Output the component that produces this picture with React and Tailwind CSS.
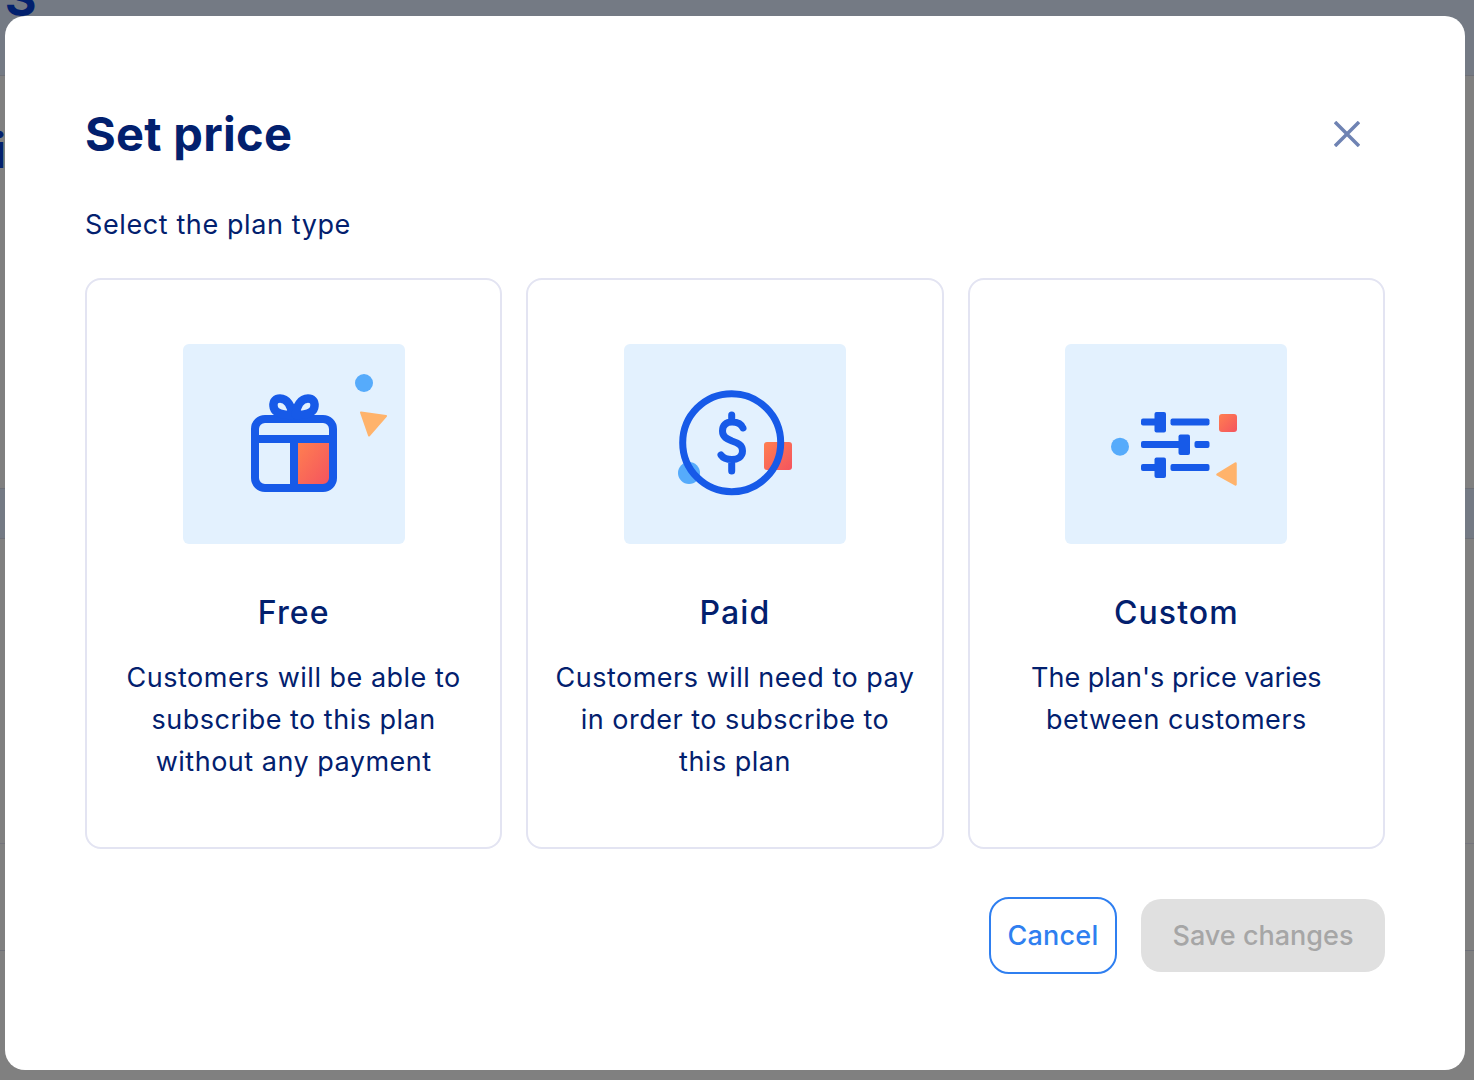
const FONT = "font-['Inter','Liberation_Sans',sans-serif]";

function Gift() {
  return (
    <svg viewBox="0 0 222 200" className="w-full h-full">
      <defs>
        <linearGradient id="g1" x1="0" y1="0" x2="1" y2="1">
          <stop offset="0" stopColor="#ff7f50" />
          <stop offset="1" stopColor="#f4545f" />
        </linearGradient>
      </defs>
      <circle cx="181" cy="39" r="9" fill="#56abfb" />
      <path d="M178 68.500L203 72L186 91.500Z" fill="#ffb36b" stroke="#ffb36b" strokeWidth="2" strokeLinejoin="round" />
      <rect x="115" y="99" width="31" height="41" fill="url(#g1)" />
      <rect x="72" y="75" width="78" height="69" rx="10" fill="none" stroke="#175ae8" strokeWidth="8" />
      <path d="M72 95H150M111 95V144" fill="none" stroke="#175ae8" strokeWidth="8" />
      <path d="M109 71C101 71 91 70 90.500 62C90 57 93 54.500 97 54.500C104 54.500 109 62 109 71Z" fill="none" stroke="#175ae8" strokeWidth="8.500" strokeLinejoin="round" />
      <path d="M113 71C121 71 131 70 131.500 62C132 57 129 54.500 125 54.500C118 54.500 113 62 113 71Z" fill="none" stroke="#175ae8" strokeWidth="8.500" strokeLinejoin="round" />
    </svg>
  );
}

function Dollar() {
  return (
    <svg viewBox="0 0 222 200" className="w-full h-full">
      <defs>
        <linearGradient id="g2" x1="0" y1="0" x2="1" y2="1">
          <stop offset="0" stopColor="#ff7f50" />
          <stop offset="1" stopColor="#f4545f" />
        </linearGradient>
      </defs>
      <circle cx="65" cy="129" r="11" fill="#56abfb" />
      <rect x="140" y="98" width="28" height="28" rx="3" fill="url(#g2)" />
      <circle cx="107.700" cy="98.700" r="49" fill="none" stroke="#175ae8" strokeWidth="7" />
      <path d="M119 84C117 79 113 78 108 78C102 78 98.500 81 98.500 87C98.500 93 103 95 108 97C114 99 118.500 101 118.500 107C118.500 113 113 115.500 108 115.500C103 115.500 99 114 97 111M107.700 71V78M107.700 116V127" fill="none" stroke="#175ae8" strokeWidth="7" strokeLinecap="round" strokeLinejoin="round" />
    </svg>
  );
}

function Sliders() {
  return (
    <svg viewBox="0 0 222 200" className="w-full h-full">
      <defs>
        <linearGradient id="g3" x1="0" y1="0" x2="1" y2="1">
          <stop offset="0" stopColor="#ff7f50" />
          <stop offset="1" stopColor="#f4545f" />
        </linearGradient>
      </defs>
      <circle cx="55" cy="102.700" r="9" fill="#56abfb" />
      <rect x="154" y="70" width="18" height="18" rx="3" fill="url(#g3)" />
      <path d="M170.500 119.500L152.500 130.500L170.500 140.500Z" fill="#ffb36b" stroke="#ffb36b" strokeWidth="2.500" strokeLinejoin="round" />
      <g fill="#175ae8">
        <rect x="76" y="74.500" width="16" height="7" rx="2" />
        <rect x="89.500" y="68" width="11.500" height="20.500" rx="2" />
        <rect x="105.500" y="74.500" width="39" height="7" rx="2" />
        <rect x="76" y="97" width="40" height="7" rx="2" />
        <rect x="113.500" y="90.500" width="11.500" height="20.500" rx="2" />
        <rect x="129.500" y="97" width="15" height="7" rx="2" />
        <rect x="76" y="120" width="16" height="7" rx="2" />
        <rect x="89.500" y="113.500" width="11.500" height="20.500" rx="2" />
        <rect x="105.500" y="120" width="39" height="7" rx="2" />
      </g>
    </svg>
  );
}

function PlanCard({ icon, title, lines }) {
  return (
    <div className="h-[571px] rounded-[16px] border-2 border-[#e3e4f2] pt-[64px] flex flex-col items-center">
      <div className="w-[222px] h-[200px] rounded-[6px] bg-[#e3f1fe]">{icon}</div>
      <h3 className="mt-[49px] text-[32px] leading-[40px] font-medium text-[#02206e] tracking-[1.1px]">{title}</h3>
      <p className="mt-[24px] text-[27px] leading-[42px] text-[#02206e] text-center tracking-[0.5px]">
        {lines.map((l) => (
          <span key={l} className={l.includes("plan's") ? "block whitespace-nowrap tracking-normal" : "block whitespace-nowrap"}>{l}</span>
        ))}
      </p>
    </div>
  );
}

export default function App() {
  return (
    <div className={`relative h-[1080px] overflow-hidden bg-[#808080] ${FONT}`}>
      <div className="h-[76px] bg-[#747a84] border-b border-[#6e7078] overflow-hidden">
        <div className="-mt-[30px] pl-[5px] text-[48px] leading-[58px] font-bold text-[#02206e]">S</div>
      </div>
      <div className="h-[412px] overflow-hidden">
        <div className="mt-[46px] -ml-[7px] text-[48px] leading-[58px] font-bold text-[#02206e]">i</div>
      </div>
      <div className="h-[51px] bg-[#747a84] border-y border-[#6e7078]" />
      <div className="h-[305px] border-b border-[#74747c]" />
      <div className="h-[107px] border-b border-[#6e7078]" />

      <div className="absolute left-[5px] top-[16px] w-[1460px] h-[1054px] rounded-[20px] bg-white px-[80px]">
        <div className="h-[163px] flex items-end justify-between pb-[15px]">
          <h2 className="text-[47px] leading-[60px] font-bold text-[#02206e] tracking-[0.3px]">Set price</h2>
          <svg viewBox="0 0 26 26" className="w-[26px] h-[26px] mb-[17px] mr-[25px]">
            <path d="M1 1L25 25M25 1L1 25" stroke="#6f83b3" strokeWidth="3.500" fill="none" />
          </svg>
        </div>
        <p className="mt-[28px] text-[27px] leading-[36px] text-[#02206e] tracking-[0.6px]">Select the plan type</p>
        <div className="mt-[35px] grid grid-cols-3 gap-[24px]">
          <PlanCard icon={<Gift />} title="Free" lines={["Customers will be able to", "subscribe to this plan", "without any payment"]} />
          <PlanCard icon={<Dollar />} title="Paid" lines={["Customers will need to pay", "in order to subscribe to", "this plan"]} />
          <PlanCard icon={<Sliders />} title="Custom" lines={["The plan's price varies", "between customers"]} />
        </div>
        <div className="mt-[48px] flex items-center justify-end gap-[24px]">
          <button className="w-[128px] h-[77px] pt-[2px] rounded-[20px] border-2 border-[#2f7ff0] bg-white text-[27px] font-medium text-[#2f7ff0] tracking-[0.2px]">Cancel</button>
          <button className="w-[244px] h-[73px] pt-[2px] rounded-[20px] bg-[#e0e0e0] text-[27px] font-medium text-[#a6a6a6]">Save changes</button>
        </div>
      </div>
    </div>
  );
}
